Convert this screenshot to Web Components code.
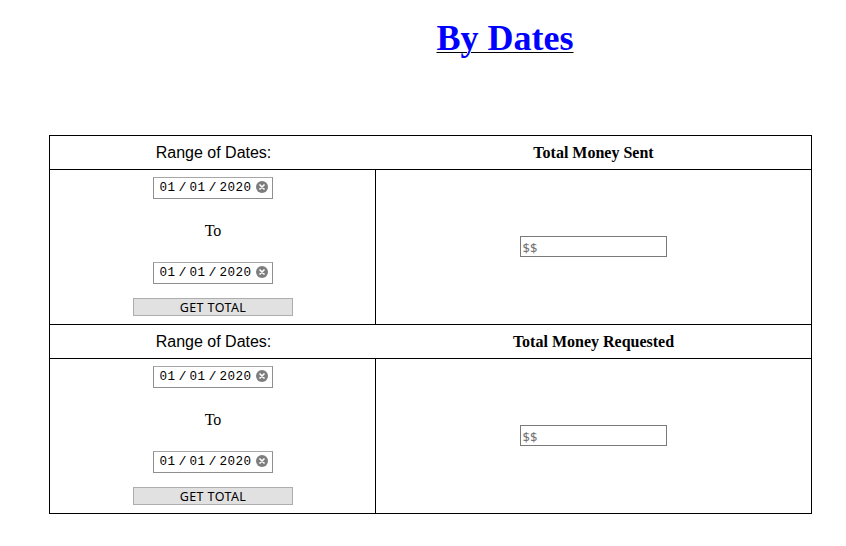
<!DOCTYPE html>
<html lang="en">
<head>
<meta charset="utf-8">
<title>By Dates</title>
<style>
html, body { margin: 0; background: #fff; }
body { height: 546px; overflow: hidden; }
</style>
</head>
<body>
<dates-page></dates-page>
<script>
class DateField extends HTMLElement {
  constructor() {
    super();
    const [m, d, y] = (this.getAttribute('value') || '').split('/');
    this.attachShadow({ mode: 'open' }).innerHTML = `
      <style>
        :host { display: flex; align-items: center; box-sizing: border-box; width: 120px; height: 22px;
          border: 1px solid #8f8f8f; border-top-color: #a6a6a6; padding: 0 4px 0 6px; background: #fff;
          font: 12.6px/20px "Liberation Mono", "Courier New", monospace; letter-spacing: .45px; color: #000; }
        span { flex: none; white-space: pre; }
        .sep { width: 14px; text-align: center; font-size: 13.333px; letter-spacing: 0; }
        svg { margin: 0 0 1px auto; flex: none; }
      </style>
      <span>${m}</span><span class="sep">/</span><span>${d}</span><span class="sep">/</span><span>${y}</span>
      <svg width="12" height="13" viewBox="0 0 12 13"><circle cx="6" cy="6" r="6" fill="#7d7d7d"/><path d="M4 4l4 4M8 4l-4 4" stroke="#fff" stroke-width="1.7" stroke-linecap="round"/></svg>`;
  }
}
customElements.define('date-field', DateField);

class TotalButton extends HTMLElement {
  constructor() {
    super();
    this.attachShadow({ mode: 'open' }).innerHTML = `
      <style>
        :host { display: block; }
        button { display: block; box-sizing: border-box; width: 160px; height: 18px; padding: 0 0 0 1px; margin: 0;
          border: 1px solid #adadad; border-radius: 0; background: #e1e1e1; color: #000;
          font: 12.5px/18px "Noto Sans", sans-serif; letter-spacing: .38px; text-align: center; }
      </style>
      <button><slot></slot></button>`;
  }
}
customElements.define('total-button', TotalButton);

class MoneyField extends HTMLElement {
  constructor() {
    super();
    this.attachShadow({ mode: 'open' }).innerHTML = `
      <style>
        :host { display: block; box-sizing: border-box; width: 147px; height: 21px; border: 1px solid #7a7a7a;
          padding-left: 2px; background: #fff; color: #757575; font: 13px/22px "Noto Sans", sans-serif; }
      </style>
      <slot></slot>`;
  }
}
customElements.define('money-field', MoneyField);

class DateSection extends HTMLElement {
  constructor() {
    super();
    this.attachShadow({ mode: 'open' }).innerHTML = `
      <style>
        :host { display: grid; grid-template-columns: 325px 1fr; grid-template-rows: 33px 155px;
          border-bottom: 1px solid #000; color: #000; }
        .label { font: 16px/34px "Liberation Sans", Arial, sans-serif; text-align: center; padding-left: 2px; }
        .title { font: bold 16px/34px "Liberation Serif", "Times New Roman", serif; text-align: center; padding-left: 1px; }
        .range { box-sizing: border-box; border-top: 1px solid #000; border-right: 1px solid #000; margin-right: -1px;
          display: flex; flex-direction: column; align-items: center; padding-top: 7px; }
        .to { font: 16px/22px "Liberation Serif", "Times New Roman", serif; margin: 21px 0 20px; padding-left: 1px; }
        total-button { margin-top: 14px; }
        .total { box-sizing: border-box; border-top: 1px solid #000; display: flex; justify-content: center; padding-top: 66px; }
      </style>
      <div class="label"><slot name="label"></slot></div>
      <div class="title"><slot name="title"></slot></div>
      <div class="range">
        <date-field value="01/01/2020"></date-field>
        <div class="to">To</div>
        <date-field value="01/01/2020"></date-field>
        <total-button>GET TOTAL</total-button>
      </div>
      <div class="total"><money-field>$$</money-field></div>`;
  }
}
customElements.define('date-section', DateSection);

class DatesPage extends HTMLElement {
  constructor() {
    super();
    this.attachShadow({ mode: 'open' }).innerHTML = `
      <style>
        :host { display: block; }
        h1 { margin: 0; padding: 17px 0 0 164px; height: 118px; text-align: center;
          font: bold 36px/42px "Liberation Serif", "Times New Roman", serif; }
        h1 u { color: #000; text-decoration: underline; text-decoration-thickness: 1px; text-underline-offset: 2px; }
        h1 span { color: #00f; }
        main { box-sizing: border-box; width: 763px; margin-left: 49px; border: 1px solid #000; border-bottom: 0; }
      </style>
      <h1><u><span>By Dates</span></u></h1>
      <main>
        <date-section><span slot="label">Range of Dates:</span><span slot="title">Total Money Sent</span></date-section>
        <date-section><span slot="label">Range of Dates:</span><span slot="title">Total Money Requested</span></date-section>
      </main>`;
  }
}
customElements.define('dates-page', DatesPage);
</script>
</body>
</html>
